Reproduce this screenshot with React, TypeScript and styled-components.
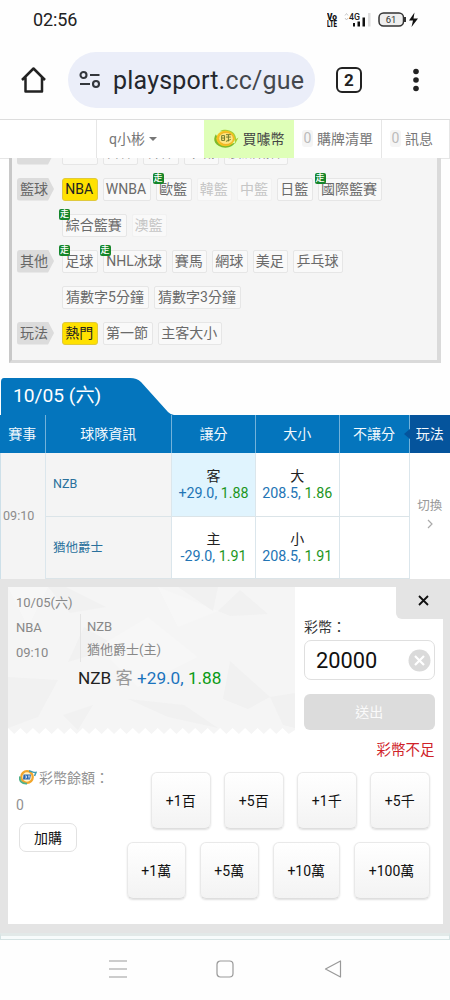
import React from "react";
import styled, { createGlobalStyle, css } from "styled-components";

const Global = createGlobalStyle`
  * { box-sizing: border-box; }
  body { margin: 0; background: #fff; font-family: Roboto, "Noto Sans CJK TC", sans-serif; color: #222; }
  button, input { font-family: inherit; margin: 0; padding: 0; }
`;

const Screen = styled.div`
  width: 450px;
  height: 1000px;
  overflow: hidden;
  display: flex;
  flex-direction: column;
  background: #fefefe;
`;

/* ---- system status bar ---- */
const StatusBar = styled.header`
  height: 40px;
  flex: none;
  display: flex;
  justify-content: space-between;
  padding: 0 31px 0 33px;
`;
const Clock = styled.span`
  font-size: 18px;
  line-height: 40px;
  letter-spacing: -0.1px;
  color: #222;
`;
const StatusIcons = styled.div`
  display: flex;
  padding-top: 11px;
`;

/* ---- browser bar ---- */
const BrowserBar = styled.div`
  height: 79px;
  flex: none;
  display: flex;
  align-items: center;
  padding: 0 31px 0 20px;
`;
const UrlPill = styled.div`
  width: 247px;
  height: 56px;
  margin: 0 21px 0 20px;
  padding-left: 11px;
  border-radius: 28px;
  background: #ebeef9;
  display: flex;
  align-items: center;
`;
const Url = styled.span`
  margin: 2px 0 0 12px;
  font-size: 25px;
  line-height: 30px;
  letter-spacing: 0.2px;
  color: #24272d;
  white-space: nowrap;
  span { color: #44474e; }
`;
const TabCount = styled.div`
  width: 26px;
  height: 26px;
  border: 2.5px solid #222;
  border-radius: 6px;
  font-size: 17px;
  font-weight: 700;
  line-height: 22px;
  text-align: center;
`;
const MenuDots = styled.svg`
  margin-left: auto;
`;

/* ---- site navigation ---- */
const SiteNav = styled.nav`
  height: 40px;
  flex: none;
  display: grid;
  grid-template-columns: 97px 107px 90px 88px 68px;
  border-top: 1px solid #ddd;
  border-bottom: 1px solid #e6e6e6;
  background: #fff;
`;
const NavItem = styled.div<{ $green?: boolean; $pad?: number }>`
  display: flex;
  align-items: center;
  padding: 0 0 2px ${(p) => p.$pad ?? 0}px;
  border-right: ${(p) => (p.$green === undefined ? "1px solid #e6e6e6" : "0")};
  background: ${(p) => (p.$green ? "#dfffb8" : "transparent")};
  color: ${(p) => (p.$green ? "#444" : "#777")};
  font-size: 14px;
  white-space: nowrap;
`;
const Caret = styled.i`
  margin: 2px 0 0 4px;
  border: 4px solid transparent;
  border-top-color: #777;
  border-bottom: 0;
`;
const Count = styled.span`
  width: 11px;
  height: 17px;
  margin-right: 4px;
  background: #f5f5f5;
  border-radius: 3px;
  color: #bbb;
  line-height: 17px;
  text-align: center;
`;

/* ---- league filters ---- */
const FilterPanel = styled.section`
  height: 205px;
  flex: none;
  margin: -1px 9px 0;
  overflow: hidden;
  display: flex;
  flex-direction: column;
  justify-content: flex-end;
  padding-bottom: 9px;
  border: solid #dadada;
  border-width: 0 4px 3px 3px;
  border-left-color: #c8c8c8;
  background: #f5f5f5;
`;
const FilterRow = styled.div<{ $scrolled?: boolean }>`
  height: 36px;
  flex: none;
  display: flex;
  align-items: center;
  gap: 5px;
  padding-left: 5px;
  ${(p) => p.$scrolled && css`&& > * { line-height: 18px; color: #888; }`}
`;
const Label = styled.div<{ $empty?: boolean }>`
  width: 37px;
  height: 23px;
  margin-right: 3px;
  padding-left: 3px;
  border-radius: 3px;
  background: #dcdcdc;
  clip-path: polygon(0 0, 84% 0, 100% 50%, 84% 100%, 0 100%);
  color: #666;
  font-size: 14px;
  line-height: 22px;
  visibility: ${(p) => (p.$empty ? "hidden" : "visible")};
`;
const Chip = styled.div<{ $w: number; $state?: "on" | "off" }>`
  position: relative;
  width: ${(p) => p.$w}px;
  height: 23px;
  border: 1px solid #e6e6e6;
  border-radius: 2px;
  background: #f9f9f9;
  color: #6a6a6a;
  font-size: 14px;
  line-height: 21px;
  text-align: center;
  text-indent: -1px;
  white-space: nowrap;
  ${(p) => p.$state === "on" && css`background: #ffe100; border-color: #e0c93c; border-radius: 3px; color: #222;`}
  ${(p) => p.$state === "off" && css`border-color: #f1f1f1; color: #c6c6c6;`}
`;
const LiveBadge = styled.span`
  position: absolute;
  left: -4px;
  top: -6px;
  width: 11px;
  height: 11px;
  border-radius: 2px;
  background: #16862a;
  color: #fff;
  font-size: 9px;
  font-weight: 500;
  line-height: 11px;
  text-indent: 0;
`;

/* ---- odds table ---- */
const DateTab = styled.div`
  position: relative;
  height: 37px;
  flex: none;
  margin-top: 15px;
  padding-left: 13px;
  color: #fff;
  font-size: 19.2px;
  line-height: 36px;
  svg { position: absolute; left: 0; top: 0; }
  span { position: relative; }
`;
const columns = "45.5px 126.5px 84px 83.5px 70px 40.5px";
const HeadRow = styled.div`
  height: 38px;
  flex: none;
  display: grid;
  grid-template-columns: ${columns};
  background: #0475bd;
`;
const HeadCell = styled.div<{ $dark?: boolean }>`
  position: relative;
  border-right: ${(p) => (p.$dark ? "0" : "1px solid #73b2da")};
  background: ${(p) => (p.$dark ? "#05549c" : "transparent")};
  color: #f3f9fd;
  font-size: 14px;
  line-height: 38px;
  text-align: center;
  white-space: nowrap;
  svg { position: absolute; left: -6px; top: 13px; }
`;
const Body = styled.div`
  height: 126px;
  flex: none;
  display: grid;
  grid-template-columns: ${columns};
  grid-template-rows: 63.5px 62.5px;
`;
const Cell = styled.div<{ $bg?: string; $tall?: boolean; $last?: boolean }>`
  grid-row: ${(p) => (p.$tall ? "span 2" : "auto")};
  border-right: ${(p) => (p.$last ? "0" : "1px solid #dbe6ec")};
  border-bottom: ${(p) => (p.$tall ? "0" : "1px solid #dbe4e8")};
  background: ${(p) => p.$bg ?? "#fff"};
  display: flex;
  flex-direction: column;
  justify-content: center;
  font-size: 14.3px;
  &:first-child { border-left: 1px solid #cde0e9; }
`;
const Time = styled.span`
  padding: 0 0 1px 2px;
  font-size: 12.6px;
  color: #8c8c8c;
`;
const Team = styled.span`
  padding: 0 0 1px 7.5px;
  font-size: 12.5px;
  color: #2a719c;
`;
const Side = styled.span`
  height: 17px;
  line-height: 18px;
  text-align: center;
  font-size: 14px;
  color: #222;
`;
const Odds = styled.span`
  height: 17px;
  line-height: 18px;
  text-align: center;
  color: #2375b5;
  white-space: nowrap;
  b { font-weight: 400; color: #1e961e; }
`;
const Switch = styled.span`
  padding-bottom: 7px;
  text-align: center;
  font-size: 12.5px;
  line-height: 18px;
  color: #999;
  svg { display: block; margin: 4px auto 0; }
`;

/* ---- bet slip ---- */
const Slip = styled.section`
  position: relative;
  height: 354px;
  flex: none;
  border: solid #e4e4e4;
  border-width: 8px 7px 9px 8px;
  background: #fff;
`;
const SlipTop = styled.div`
  height: 182px;
  display: flex;
`;
const Ticket = styled.div`
  position: relative;
  width: 287px;
  height: 147px;
  > svg { position: absolute; left: 0; top: 0; }
`;
const TicketText = styled.div`
  position: relative;
  padding: 6px 0 0 8px;
  font-size: 13px;
  color: #888;
`;
const TicketDate = styled.div`
  height: 21px;
  line-height: 20px;
`;
const Match = styled.div`
  height: 50px;
  display: flex;
  line-height: 25px;
`;
const Meta = styled.div`
  width: 65px;
  padding-top: 1px;
  height: 48px;
  border-right: 1px solid #e4e4e4;
`;
const Sides = styled.div`
  padding: 1px 0 0 6px;
  line-height: 23px;
`;
const Pick = styled.div`
  padding-left: 62px;
  font-size: 17.2px;
  line-height: 28px;
  color: #222;
  white-space: nowrap;
  i { font-style: normal; color: #999; }
  em { font-style: normal; color: #1b73bd; }
  b { font-weight: 400; color: #0b9a14; }
`;
const Stake = styled.div`
  width: 130.5px;
  margin-left: 9px;
  padding-top: 30px;
  display: flex;
  flex-direction: column;
`;
const StakeLabel = styled.label`
  height: 23px;
  font-size: 14px;
  line-height: 20px;
  color: #333;
`;
const StakeField = styled.div`
  height: 40px;
  padding: 0 3px 0 11px;
  display: flex;
  align-items: center;
  justify-content: space-between;
  border: 1px solid #dfdfdf;
  border-radius: 7px;
  font-size: 21.8px;
  color: #111;
`;
const Submit = styled.button`
  height: 36px;
  margin-top: 14px;
  border: 0;
  border-radius: 6px;
  background: #dcdcdc;
  color: #fafafa;
  font-size: 14px;
  line-height: 34px;
`;
const Warning = styled.div`
  margin-top: 10px;
  text-align: right;
  font-size: 14.5px;
  line-height: 21px;
  color: #cf2229;
`;
const CloseButton = styled.button`
  position: absolute;
  right: -7px;
  top: -2px;
  width: 54px;
  height: 34px;
  border: 0;
  border-radius: 0 0 0 6px;
  background: #e4e4e4;
  svg { display: block; margin: 0 0 4px 22px; }
`;
const SlipBottom = styled.div`
  display: flex;
  justify-content: space-between;
  padding: 2px 13.5px 0 8px;
`;
const Balance = styled.div`
  margin-top: -4px;
  font-size: 14px;
  color: #929292;
  white-space: nowrap;
`;
const BalanceTitle = styled.div`
  display: flex;
  align-items: center;
  height: 20px;
  gap: 2px;
  margin-left: 3px;
`;
const BalanceValue = styled.div`
  margin-top: 8px;
  line-height: 20px;
`;
const TopUp = styled.button`
  width: 58px;
  height: 29px;
  margin: 8px 0 0 3px;
  border: 1px solid #e2e2e2;
  border-radius: 7px;
  background: #fff;
  color: #111;
  font-size: 14px;
  line-height: 26px;
`;
const Pad = styled.div`
  display: flex;
  flex-direction: column;
  gap: 13px;
  padding-top: 1px;
`;
const PadRow = styled.div`
  display: flex;
  justify-content: flex-end;
  gap: 13.5px;
`;
const Key = styled.button<{ $w?: number }>`
  width: ${(p) => p.$w ?? 59.5}px;
  height: 57px;
  padding-bottom: 2px;
  border: 1px solid #e9e9e9;
  border-bottom-color: #dedede;
  border-radius: 6px;
  background: linear-gradient(#fff, #f3f3f3);
  box-shadow: 0 1px 2px rgba(0, 0, 0, 0.13);
  color: #111;
  font-size: 14px;
`;

const TableEdge = styled.div`
  height: 7px;
  flex: none;
  border: 1px solid #d5e3e3;
  border-top-width: 3px;
  border-top-color: #e2e9e8;
  background: #f7fbfb;
`;
const SystemNav = styled.footer`
  height: 60px;
  flex: none;
  display: flex;
  justify-content: center;
  align-items: center;
  gap: 89.5px;
  padding-bottom: 2px;
`;

type ChipData = { t: string; w: number; live?: boolean; s?: "on" | "off" };
const filters: { label?: string; chips: ChipData[] }[] = [
  { label: "棒球", chips: [{ t: "MLB", w: 35.5 }, { t: "日棒", w: 35.5 }, { t: "韓棒", w: 35.5 }, { t: "中職", w: 35.5 }, { t: "澳洲職棒", w: 64 }] },
  {
    label: "籃球",
    chips: [
      { t: "NBA", w: 35.5, s: "on" }, { t: "WNBA", w: 48 }, { t: "歐籃", w: 36, live: true }, { t: "韓籃", w: 35.5, s: "off" },
      { t: "中籃", w: 35, s: "off" }, { t: "日籃", w: 35.5 }, { t: "國際籃賽", w: 64, live: true },
    ],
  },
  { chips: [{ t: "綜合籃賽", w: 64.5, live: true }, { t: "澳籃", w: 35, s: "off" }] },
  {
    label: "其他",
    chips: [
      { t: "足球", w: 35.5, live: true }, { t: "NHL冰球", w: 64, live: true }, { t: "賽馬", w: 35.5 }, { t: "網球", w: 35.5 },
      { t: "美足", w: 35.5 }, { t: "乒乓球", w: 50 },
    ],
  },
  { chips: [{ t: "猜數字5分鐘", w: 87 }, { t: "猜數字3分鐘", w: 87 }] },
  { label: "玩法", chips: [{ t: "熱門", w: 35.5, s: "on" }, { t: "第一節", w: 50 }, { t: "主客大小", w: 64.5 }] },
];

const ticketEdge = () => {
  let d = "M0 0H287V143";
  const step = 287 / 23;
  for (let i = 0; i < 23; i++) {
    const x = 287 - i * step;
    d += `L${x - step / 2} 147L${x - step} 141`;
  }
  return d + "Z";
};

const OddsCell = ({ side, line, odds, bg }: { side: string; line: string; odds: string; bg?: string }) => (
  <Cell $bg={bg}>
    <Side>{side}</Side>
    <Odds>{line}, <b>{odds}</b></Odds>
  </Cell>
);

const CoinIcon = () => (
  <svg width="27" height="21" viewBox="0 0 28 21">
    <path d="M4 6C0 12 3 19 14 20C19 20 22 18 24 15L20 16C13 18 6 14 5 8Z" fill="#7dba2c" />
    <path d="M8 3C15-1 25 3 25 11L27.500 9.500L24 16C24 9 18 3 8 3Z" fill="#a8cf35" />
    <ellipse cx="14" cy="10.500" rx="9.600" ry="8" fill="#f6c321" />
    <ellipse cx="14.500" cy="10.500" rx="7.600" ry="6.200" fill="#ffe680" stroke="#e9a21a" strokeWidth=".7" />
    <path d="M10 7.500h3v5h-3zM14.500 6.500h5M14.500 9h5M17 6.500v7M14.500 13.500l5-2M10 10h3" fill="none" stroke="#6c7a2c" strokeWidth="1" />
  </svg>
);

const LotteryIcon = () => (
  <svg width="18" height="16" viewBox="0 0 18 16">
    <circle cx="8" cy="8" r="5.800" fill="#fff4cf" stroke="#f2a62c" strokeWidth="2.200" />
    <path d="M1 7.500C0 12 3 15 8 14.600" fill="none" stroke="#4fb08a" strokeWidth="1.800" />
    <path d="M10 2C13 2 14 4 17 3.500L15.500 7" fill="none" stroke="#3f9cae" strokeWidth="1.500" />
    <path d="M4.500 5.500h7.500l-1 5h-7z" fill="#2c67ad" />
    <path d="M6 7h1.500v2H6M9 7h2M10 7v2.500" fill="none" stroke="#d9ecff" strokeWidth=".8" />
  </svg>
);

export default function App() {
  return (
    <Screen>
      <Global />
      <StatusBar>
        <Clock>02:56</Clock>
        <StatusIcons>
          <svg width="92" height="18" viewBox="0 0 92 18">
            <g fill="#111" fontWeight="900" fontSize="9">
              <text x="0" y="8.500" textLength="10" lengthAdjust="spacingAndGlyphs">Vo</text>
              <text x="0" y="16" textLength="10" lengthAdjust="spacingAndGlyphs">LTE</text>
            </g>
            <path d="M18 4.500l1.500-2 1.500 2M18 7l1.500 2L21 7" fill="none" stroke="#bbb" strokeWidth=".8" />
            <text x="22" y="8.500" fontSize="9.500" fontWeight="500" fill="#222" textLength="11" lengthAdjust="spacingAndGlyphs">4G</text>
            <path d="M26 12h2v3.500h-2zM30.500 10.500H33v5h-2.500zM35.500 6.500H38v9h-2.500z" fill="#111" />
            <path d="M41 2h2.500v13.500H41z" fill="#ddd" />
            <rect x="52" y="2" width="24.500" height="13" rx="4.500" fill="#eee" stroke="#333" strokeWidth="1.500" />
            <path d="M78 6v5" stroke="#333" strokeWidth="2" />
            <text x="64" y="12" fontSize="9.500" fill="#333" textAnchor="middle">61</text>
            <path d="M87.500 1.500L82 9.500h4L84.500 16l6.500-8.500h-4.500z" fill="#111" />
          </svg>
        </StatusIcons>
      </StatusBar>

      <BrowserBar>
        <svg width="28" height="28" viewBox="0 0 28 28">
          <path d="M2 14L13.500 2.500L25 14M5.500 11.500V25.500H22V11.500" fill="none" stroke="#222" strokeWidth="2.500" strokeLinejoin="round" />
        </svg>
        <UrlPill>
          <svg width="22" height="20" viewBox="0 0 22 20">
            <g fill="none" stroke="#33363c" strokeWidth="2.100">
              <circle cx="4.500" cy="5" r="3" />
              <path d="M11 5h9.500M1 14h10" />
              <circle cx="17" cy="14" r="3" />
            </g>
          </svg>
          <Url>playsport.<span>cc/gue</span></Url>
        </UrlPill>
        <TabCount>2</TabCount>
        <MenuDots width="6" height="24" viewBox="0 0 6 24">
          <circle cx="3" cy="3.500" r="2.800" fill="#222" />
          <circle cx="3" cy="12" r="2.800" fill="#222" />
          <circle cx="3" cy="20.500" r="2.800" fill="#222" />
        </MenuDots>
      </BrowserBar>

      <SiteNav>
        <NavItem />
        <NavItem $pad={12} $green={false}>q小彬<Caret /></NavItem>
        <NavItem $green $pad={8}><CoinIcon />&nbsp;買噱幣</NavItem>
        <NavItem $pad={8}><Count>0</Count>購牌清單</NavItem>
        <NavItem $pad={8}><Count>0</Count>訊息</NavItem>
      </SiteNav>

      <FilterPanel>
        {filters.map((row, i) => (
          <FilterRow key={i} $scrolled={i === 0}>
            <Label $empty={!row.label}>{row.label}</Label>
            {row.chips.map((c) => (
              <Chip key={c.t} $w={c.w} $state={c.s}>
                {c.live && <LiveBadge>走</LiveBadge>}
                {c.t}
              </Chip>
            ))}
          </FilterRow>
        ))}
      </FilterPanel>

      <DateTab>
        <svg width="174" height="37" viewBox="0 0 174 37">
          <path d="M1 4Q1 0 4 0H130Q137 0 141 4L168 34Q171 37 174 37H1Z" fill="#0475bd" />
        </svg>
        <span>10/05 (六)</span>
      </DateTab>
      <HeadRow>
        <HeadCell>賽事</HeadCell>
        <HeadCell>球隊資訊</HeadCell>
        <HeadCell>讓分</HeadCell>
        <HeadCell>大小</HeadCell>
        <HeadCell>不讓分</HeadCell>
        <HeadCell $dark>
          <svg width="7" height="12" viewBox="0 0 7 12"><path d="M7 0V12L0 6Z" fill="#05549c" /></svg>
          玩法
        </HeadCell>
      </HeadRow>
      <Body>
        <Cell $tall $bg="#f4f4f4"><Time>09:10</Time></Cell>
        <Cell $bg="#f4f4f4"><Team>NZB</Team></Cell>
        <OddsCell side="客" line="+29.0" odds="1.88" bg="#e0f4fe" />
        <OddsCell side="大" line="208.5" odds="1.86" />
        <Cell />
        <Cell $tall $last>
          <Switch>
            切換
            <svg width="6" height="10" viewBox="0 0 6 10"><path d="M1 1l4 4-4 4" fill="none" stroke="#aaa" strokeWidth="1.200" /></svg>
          </Switch>
        </Cell>
        <Cell $bg="#f4f4f4"><Team>猶他爵士</Team></Cell>
        <OddsCell side="主" line="-29.0" odds="1.91" />
        <OddsCell side="小" line="208.5" odds="1.91" />
        <Cell />
      </Body>

      <Slip>
        <SlipTop>
          <Ticket>
            <svg width="287" height="147" viewBox="0 0 287 147">
              <path d={ticketEdge()} fill="#f5f5f5" />
              <path d="M58 0L98 20L62 26L40 0ZM210 24L232 3L260 27L222 29ZM215 112L222 74L262 110L240 122ZM120 112L176 118L210 141L160 130ZM0 90L50 93L30 130L0 141ZM60 75L76 40L110 60Z" fill="#f1f1f1" />
              <path d="M90 60L140 30L190 70L130 100ZM0 0L40 0L20 40ZM150 0L210 24L170 40Z" fill="#f7f7f7" />
              <path d="M170 0H210L205 24ZM55 128L85 118L70 143ZM262 110L287 106V141L275 138Z" fill="#f1f1f1" />
            </svg>
            <TicketText>
              <TicketDate>10/05(六)</TicketDate>
              <Match>
                <Meta>NBA<br />09:10</Meta>
                <Sides>NZB<br />猶他爵士(主)</Sides>
              </Match>
              <Pick>NZB <i>客</i> <em>+29.0,</em> <b>1.88</b></Pick>
            </TicketText>
          </Ticket>
          <Stake>
            <StakeLabel>彩幣：</StakeLabel>
            <StakeField>
              20000
              <svg width="23" height="23" viewBox="0 0 23 23">
                <circle cx="11.500" cy="11.500" r="11" fill="#dadada" />
                <path d="M7 7l9 9M16 7l-9 9" stroke="#fff" strokeWidth="2.200" />
              </svg>
            </StakeField>
            <Submit>送出</Submit>
            <Warning>彩幣不足</Warning>
          </Stake>
        </SlipTop>
        <CloseButton>
          <svg width="11" height="11" viewBox="0 0 11 11"><path d="M1 1l9 9M10 1l-9 9" stroke="#111" strokeWidth="1.800" /></svg>
        </CloseButton>
        <SlipBottom>
          <Balance>
            <BalanceTitle><LotteryIcon />彩幣餘額：</BalanceTitle>
            <BalanceValue>0</BalanceValue>
            <TopUp>加購</TopUp>
          </Balance>
          <Pad>
            <PadRow>
              <Key>+1百</Key><Key>+5百</Key><Key>+1千</Key><Key>+5千</Key>
            </PadRow>
            <PadRow>
              <Key>+1萬</Key><Key>+5萬</Key><Key $w={67.5}>+10萬</Key><Key $w={76}>+100萬</Key>
            </PadRow>
          </Pad>
        </SlipBottom>
      </Slip>
      <TableEdge />

      <SystemNav>
        <svg width="18" height="18" viewBox="0 0 18 18"><path d="M0 1h18M0 9h18M0 17h18" stroke="#999" strokeWidth="1.200" /></svg>
        <svg width="18" height="18" viewBox="0 0 18 18"><rect x="1" y="1" width="16" height="16" rx="3.500" fill="none" stroke="#999" strokeWidth="1.200" /></svg>
        <svg width="18" height="18" viewBox="0 0 18 18"><path d="M1.500 9L16.500 1V17Z" fill="none" stroke="#999" strokeWidth="1.200" strokeLinejoin="round" /></svg>
      </SystemNav>
    </Screen>
  );
}
